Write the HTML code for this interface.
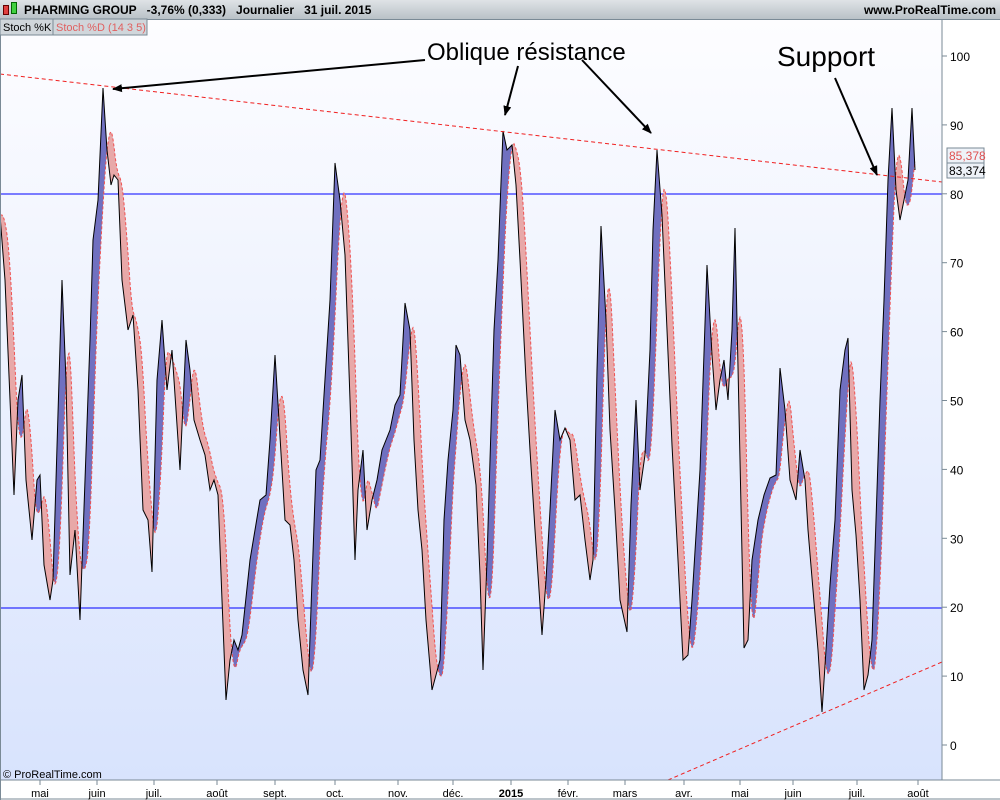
<!DOCTYPE html>
<html><head><meta charset="utf-8"><style>
body{margin:0;width:1000px;height:800px;overflow:hidden;background:#fff;font-family:"Liberation Sans",sans-serif}
#hdr{position:absolute;left:0;top:0;width:1000px;height:19px;background:linear-gradient(#dfe3e6,#b9c1c7);border-bottom:1px solid #7a8a96;font-size:12px;font-weight:bold;color:#000}
svg{position:absolute;left:0;top:0}
</style></head><body>
<div id="hdr"><span style="position:absolute;left:24px;top:3px">PHARMING GROUP&nbsp;&nbsp;&nbsp;-3,76% (0,333)&nbsp;&nbsp;&nbsp;Journalier&nbsp;&nbsp;&nbsp;31 juil. 2015</span><span style="position:absolute;right:4px;top:3px">www.ProRealTime.com</span>
<div style="position:absolute;left:3px;top:5px;width:4px;height:8px;background:#e04040;border:1px solid #600"></div>
<div style="position:absolute;left:11px;top:2px;width:4px;height:10px;background:#40d040;border:1px solid #060"></div></div>
<svg id="s" width="1000" height="800" viewBox="0 0 1000 800"></svg>
<script>
const K=[[0,215],[5,280],[14,495],[18,400],[22,375],[26,480],[32,540],[37,480],[40,475],[44,565],[50,600],[53,580],[62,280],[66,380],[70,575],[75,530],[80,620],[85,480],[90,340],[93,240],[98,200],[103,88],[107,150],[111,185],[114,175],[118,180],[122,280],[128,330],[133,315],[138,390],[143,510],[148,520],[152,572],[157,380],[162,320],[167,390],[172,350],[176,410],[180,470],[186,340],[190,370],[194,420],[200,440],[205,455],[210,490],[214,480],[218,495],[222,600],[226,700],[230,660],[234,640],[238,650],[242,635],[250,560],[255,530],[260,500],[266,495],[270,440],[275,355],[279,420],[285,520],[290,525],[294,560],[298,620],[303,670],[308,695],[312,580],[316,470],[320,460],[324,395],[330,300],[335,163],[340,200],[345,255],[350,400],[355,560],[358,490],[363,450],[367,530],[372,500],[377,480],[382,450],[386,440],[390,430],[395,405],[400,395],[405,303],[410,330],[414,440],[418,510],[422,550],[426,620],[432,690],[436,675],[440,660],[444,520],[448,460],[453,410],[456,345],[460,355],[465,420],[470,440],[476,485],[480,575],[483,670],[487,560],[490,460],[494,330],[498,260],[503,131],[507,150],[512,145],[516,185],[520,260],[526,380],[530,450],[535,530],[542,635],[546,580],[550,510],[555,410],[560,440],[565,428],[570,440],[575,500],[580,495],[585,540],[590,580],[593,560],[597,370],[601,226],[606,320],[610,430],[615,510],[620,600],[627,632],[631,505],[636,400],[640,490],[645,455],[650,350],[653,230],[657,150],[662,215],[667,330],[672,445],[678,560],[683,660],[688,655],[692,600],[700,470],[707,265],[712,355],[716,410],[720,380],[724,360],[728,400],[732,330],[735,228],[740,460],[744,648],[748,640],[752,560],[758,520],[764,495],[770,478],[776,475],[780,368],[785,410],[790,480],[796,500],[800,450],[805,480],[808,530],[813,590],[818,650],[822,712],[826,650],[830,585],[835,520],[840,390],[845,350],[848,338],[852,490],[856,535],[860,600],[864,690],[868,675],[872,640],[876,520],[880,400],[884,300],[888,180],[892,108],[896,190],[900,220],[904,200],[908,180],[912,108],[915,170]];
function at(x){for(let i=1;i<K.length;i++){if(K[i][0]>=x){const a=K[i-1],b=K[i];return a[1]+(b[1]-a[1])*(x-a[0])/(b[0]-a[0]||1);}}return K[K.length-1][1];}
const D=[];for(let x=0;x<=915;x++){let s=0,n=0;for(let d=2;d<=11;d++){s+=at(Math.max(0,x-d));n++;}D.push([x,s/n]);}
const kp=K.map(p=>p.join(',')).join(' ');
const dp=D.map(p=>p.join(',')).join(' ');
const between=kp+' '+D.slice().reverse().map(p=>p.join(',')).join(' ');
const above='0,0 '+dp+' 915,0';const below='0,800 '+dp+' 915,800';
let h=`<defs><linearGradient id="bg" x1="0" y1="0" x2="0" y2="1"><stop offset="0" stop-color="#fdfdff"/><stop offset="1" stop-color="#d8e3fd"/></linearGradient>
<clipPath id="ca"><polygon points="${above}"/></clipPath><clipPath id="cb"><polygon points="${below}"/></clipPath><clipPath id="pl"><rect x="0" y="20" width="942" height="760"/></clipPath></defs>
<rect x="0" y="20" width="942" height="760" fill="url(#bg)"/>
<g clip-path="url(#pl)">
<line x1="0" y1="194" x2="942" y2="194" stroke="#0000ff"/><line x1="0" y1="608" x2="942" y2="608" stroke="#0000ff"/>
<polygon points="${between}" fill="#7070c0" clip-path="url(#ca)"/>
<polygon points="${between}" fill="#e8a8a8" clip-path="url(#cb)"/>
<polyline points="${dp}" fill="none" stroke="#f05050" stroke-dasharray="3,2" stroke-width="1"/>
<polyline points="${kp}" fill="none" stroke="#000" stroke-width="1"/>
<line x1="0" y1="74" x2="942" y2="182" stroke="#f02020" stroke-dasharray="4,3"/>
<line x1="668" y1="780" x2="942" y2="662" stroke="#f02020" stroke-dasharray="4,3"/>
</g>
<line x1="942" y1="20" x2="942" y2="780" stroke="#7a8a96"/>
<line x1="0" y1="780" x2="1000" y2="780" stroke="#7a8a96"/>
<line x1="0" y1="799" x2="1000" y2="799" stroke="#7a8a96"/>
<line x1="0.5" y1="20" x2="0.5" y2="800" stroke="#7a8a96"/>`;
for(let v=0;v<=100;v+=10){const y=745-6.89*v;h+=`<line x1="942" y1="${y}" x2="947" y2="${y}" stroke="#7a8a96"/><text x="950" y="${y+5}" font-size="12" font-family="Liberation Sans" fill="#000">${v}</text>`;}
const m=[[40,'mai'],[97,'juin'],[154,'juil.'],[217,'août'],[275,'sept.'],[335,'oct.'],[398,'nov.'],[453,'déc.'],[511,'2015'],[568,'févr.'],[625,'mars'],[684,'avr.'],[740,'mai'],[793,'juin'],[857,'juil.'],[918,'août']];
m.forEach(([x,t])=>{h+=`<line x1="${x}" y1="780" x2="${x}" y2="785" stroke="#7a8a96"/><text x="${x}" y="797" font-size="11" text-anchor="middle" font-family="Liberation Sans" ${t=='2015'?'font-weight="bold" font-size="12"':''}>${t}</text>`;});
h+=`<text x="3" y="778" font-size="11" font-family="Liberation Sans">© ProRealTime.com</text>
<text x="427" y="60" font-size="24" font-family="Liberation Sans">Oblique résistance</text>
<text x="777" y="66" font-size="28" font-family="Liberation Sans">Support</text>
<defs><marker id="ar" markerWidth="10" markerHeight="10" refX="9" refY="5" orient="auto" markerUnits="userSpaceOnUse"><path d="M0,1 L10,5 L0,9 z"/></marker></defs>
<g stroke="#000" stroke-width="2" marker-end="url(#ar)">
<line x1="425" y1="60" x2="113" y2="89"/><line x1="518" y1="66" x2="505" y2="115"/>
<line x1="582" y1="60" x2="651" y2="133"/><line x1="835" y1="78" x2="877" y2="175"/></g>
<rect x="0" y="19" width="53" height="16" fill="#d0d6db" stroke="#7a8a96"/>
<rect x="53" y="19" width="94" height="16" fill="#d0d6db" stroke="#7a8a96"/>
<text x="3" y="31" font-size="11" font-family="Liberation Sans">Stoch %K</text>
<text x="56" y="31" font-size="11" font-family="Liberation Sans" fill="#e06060">Stoch %D (14 3 5)</text>
<rect x="947" y="148" width="37" height="15" fill="#eef2f8" stroke="#7a8a96"/><text x="949" y="160" font-size="12" fill="#e05050" font-family="Liberation Sans">85,378</text>
<rect x="947" y="163" width="37" height="15" fill="#eef2f8" stroke="#7a8a96"/><text x="949" y="175" font-size="12" font-family="Liberation Sans">83,374</text>`;
document.getElementById('s').innerHTML=h;
</script>
</body></html>
